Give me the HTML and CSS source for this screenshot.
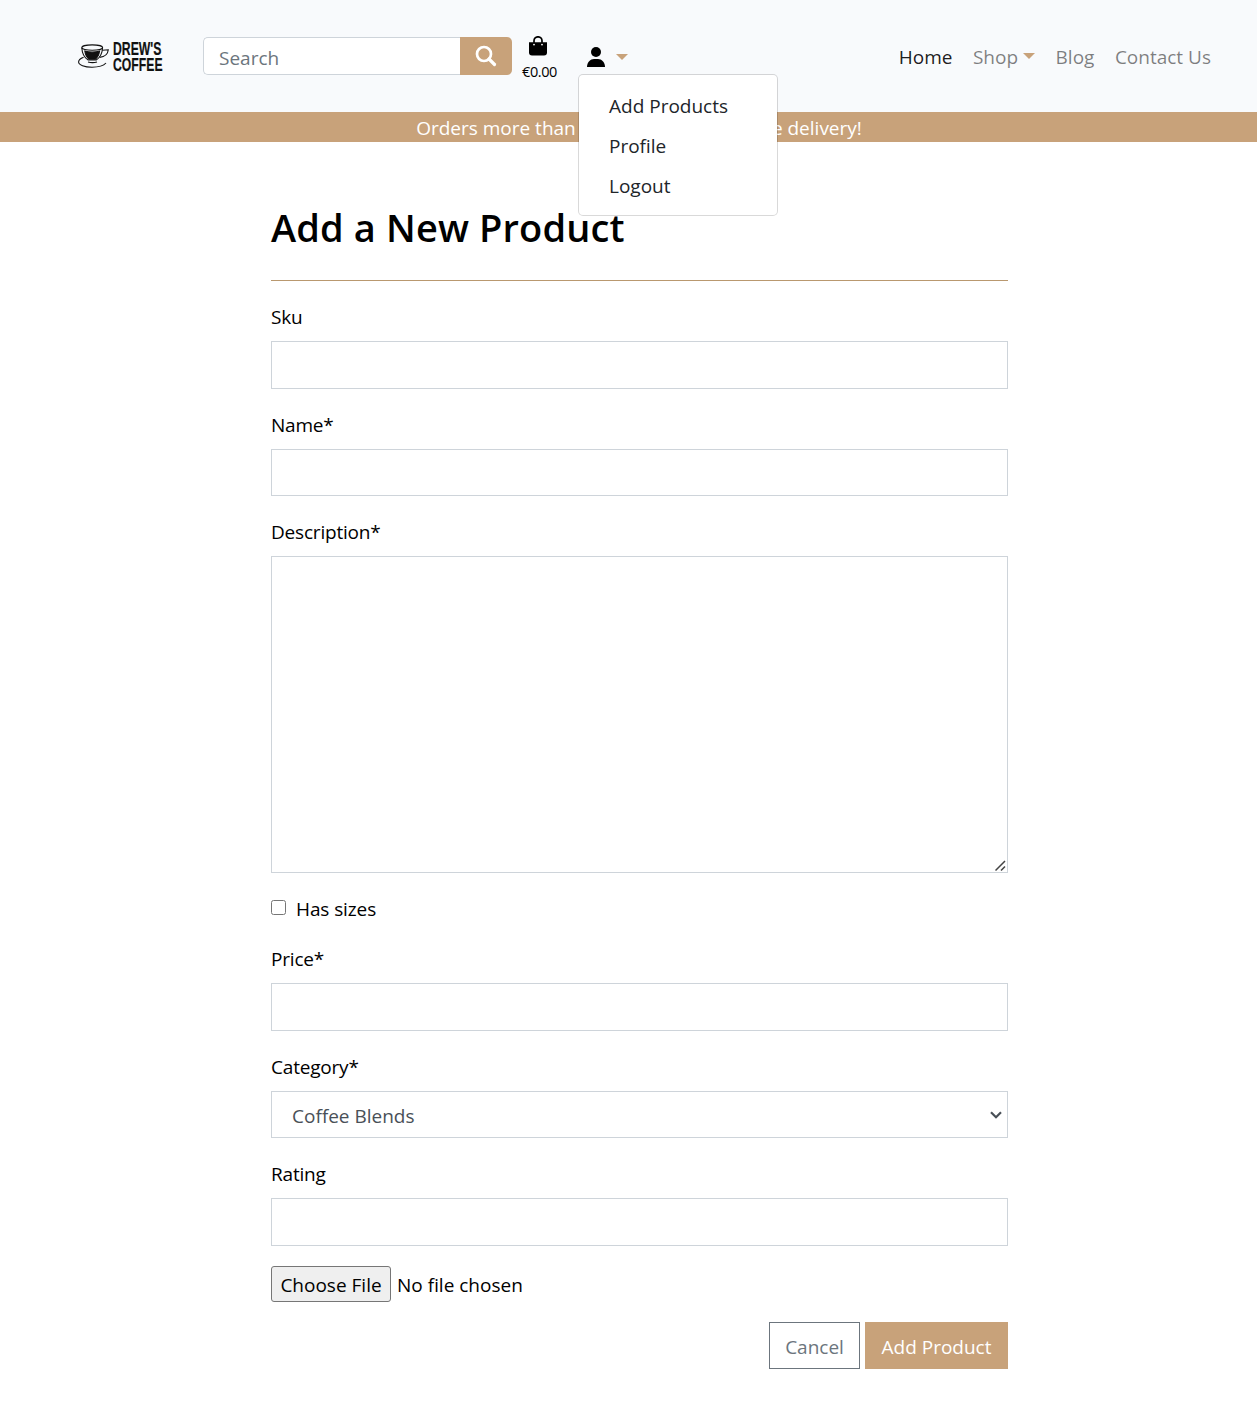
FILE: index.html
```
<!DOCTYPE html>
<html lang="en">
<head>
<meta charset="utf-8">
<title>Drew's Coffee - Add a New Product</title>
<link rel="stylesheet" href="styles.css">
</head>
<body>
<nav class="navbar">
  <a class="brand" href="#" aria-label="Drew's Coffee">
    <svg class="brand-cup" width="32" height="26" viewBox="0 0 32 26" fill="none" stroke="#111" stroke-width="1.100">
      <ellipse cx="14.200" cy="3.600" rx="10.400" ry="2.700"/>
      <path d="M3.800 3.800c.3 5.600 3 10.200 6.400 12.200h8c3.400-2 6-6.600 6.400-12.200"/>
      <path d="M6.800 7c4 1.500 10.800 1.500 14.800 0-.6 3.800-2 6.600-4.200 8.300h-6.400C8.800 13.600 7.400 10.800 6.800 7z" fill="#111"/>
      <path d="M24.300 6.200l6-.4c-.4 4-3.800 7-8.600 7.600M5.600 13.300C2 14.600.6 16 .6 18c0 3 6 5.200 13.400 5.200 6.400 0 11.600-1.500 14-4.200"/>
      <path d="M10 18c3 .8 6 .8 9 0"/>
    </svg>
    <span class="brand-text"><span>DREW'S</span><span>COFFEE</span></span>
  </a>
  <form class="search">
    <input class="search-input" type="text" placeholder="Search">
    <button class="search-button" type="button" aria-label="Search">
      <svg width="22" height="22" viewBox="0 0 22 22" fill="none" stroke="#fff"><circle cx="9" cy="9" r="7" stroke-width="2.700"/><path d="M14 14l5.500 5.500" stroke-width="3.200" stroke-linecap="round"/></svg>
    </button>
  </form>
  <a class="bag" href="#">
    <svg width="18" height="20" viewBox="0 0 18 20"><path d="M5 7V4.800a4 4 0 0 1 8 0V7" fill="none" stroke="#000" stroke-width="1.700"/><path d="M0 6.200h18V16.500a3 3 0 0 1-3 3H3a3 3 0 0 1-3-3z"/><circle cx="5" cy="8.600" r=".9" fill="#fff"/><circle cx="13" cy="8.600" r=".9" fill="#fff"/></svg>
    <span class="bag-total">€0.00</span>
  </a>
  <div class="account">
    <a class="account-toggle" href="#" aria-label="Account">
      <svg width="18" height="20" viewBox="0 0 18 20"><circle cx="9" cy="5" r="5"/><path d="M0 20c0-5 3.500-8 7-8h4c3.500 0 7 3 7 8z"/></svg>
      <span class="caret"></span>
    </a>
    <div class="menu">
      <a href="#">Add Products</a>
      <a href="#">Profile</a>
      <a href="#">Logout</a>
    </div>
  </div>
  <div class="links">
    <a class="active" href="#">Home</a>
    <a href="#">Shop<span class="caret"></span></a>
    <a href="#">Blog</a>
    <a href="#">Contact Us</a>
  </div>
</nav>
<div class="banner">Orders more than €50 will qualify for free delivery!</div>
<main class="page">
  <h1>Add a New Product</h1>
  <hr>
  <form>
    <div class="field"><label for="sku">Sku</label><input class="control" id="sku" type="text"></div>
    <div class="field"><label for="name">Name*</label><input class="control" id="name" type="text"></div>
    <div class="field">
      <label for="description">Description*</label>
      <div class="adorned">
        <textarea class="control area" id="description"></textarea>
        <svg class="grip" width="11" height="11" viewBox="0 0 11 11" fill="none" stroke="#444" stroke-width="1.500"><path d="M.5 10.500l9.500-9.500M6 10.500l4-4"/></svg>
      </div>
    </div>
    <div class="check"><input type="checkbox" id="sizes"><label for="sizes">Has sizes</label></div>
    <div class="field"><label for="price">Price*</label><input class="control" id="price" type="text"></div>
    <div class="field">
      <label for="category">Category*</label>
      <div class="adorned">
        <select class="control select" id="category"><option>Coffee Blends</option></select>
        <svg class="chevron" width="12" height="8" viewBox="0 0 12 8" fill="none" stroke="#495057" stroke-width="2.200"><path d="M1 1.200l5 5 5-5"/></svg>
      </div>
    </div>
    <div class="field"><label for="rating">Rating</label><input class="control" id="rating" type="text"></div>
    <div class="file"><button type="button">Choose File</button><span>No file chosen</span></div>
    <div class="actions"><a class="button cancel" href="#">Cancel</a><button class="button submit" type="button">Add Product</button></div>
  </form>
</main>
</body>
</html>
```
FILE: styles.css
```
* { box-sizing: border-box; }
body {
  margin: 0;
  min-height: 1422px;
  background: #fff;
  color: #000;
  font: 400 19px/30px "Open Sans", "Noto Sans", sans-serif;
}
a { color: inherit; text-decoration: none; }
input, select, textarea, button { font: inherit; }
svg { display: block; flex: none; }

.navbar { display: flex; align-items: center; height: 112px; padding: 0 36px 0 78px; background: #f8fafc; }
.brand { display: flex; align-items: center; gap: 3px; width: 125px; padding-top: 2px; }
.brand-text { display: flex; flex-direction: column; font: 700 18.500px/16px "Liberation Sans", sans-serif; color: #111; -webkit-text-stroke: .2px #111; transform: scaleX(.66); transform-origin: left; }
.search { display: flex; width: 309px; height: 38px; }
.search-input { width: 257px; border: 1px solid #ced4da; border-right: 0; border-radius: 5px 0 0 5px; padding: 3px 15px 0; background: #fff; outline: none; }
.search-input::placeholder { color: #6c757d; opacity: 1; }
.search-button { display: flex; justify-content: center; width: 52px; border: 0; border-radius: 0 5px 5px 0; padding: 8px 0 0; background: #c8a27a; }
.bag { display: flex; flex-direction: column; align-items: center; width: 52px; padding-top: 8px; }
.bag-total { margin: 4px -3px 0 0; font-size: 14.500px; line-height: 24px; letter-spacing: -.4px; }
.account { position: relative; margin-left: 23px; padding-top: 2px; }
.account-toggle { display: flex; align-items: center; gap: 11px; }
.caret { display: inline-block; width: 0; height: 0; border: 6px solid transparent; border-top-color: #c8a27a; border-bottom: 0; }
.menu { position: absolute; z-index: 2; top: 29px; left: -9px; width: 200px; height: 142px; padding: 11px 0 0 30px; border: 1px solid rgba(0, 0, 0, .15); border-radius: 5px; background: #fff; background-clip: padding-box; color: #212529; }
.menu a { display: block; height: 40px; line-height: 40px; white-space: nowrap; }
.links { display: flex; gap: 20.500px; margin-left: auto; padding: 2px 10px 0 0; color: rgba(0, 0, 0, .5); }
.links .active { color: rgba(0, 0, 0, .9); }
.links .caret { margin-left: 5px; vertical-align: 5px; }

.banner { height: 30px; padding: 1px 0 0 21px; background: #c8a27a; color: #fff; text-align: center; }

.page { width: 737px; margin-left: 271px; }
h1 { height: 98px; margin: 40px 0 0; padding-top: 21px; font-size: 38px; line-height: 48px; font-weight: 600; letter-spacing: .13px; }
hr { height: 1px; margin: 0 0 20px; border: 0; background: #b9986f; }
.field { display: flex; flex-direction: column; gap: 10px; margin-bottom: 20px; }
.field label { height: 30px; padding-top: 1px; letter-spacing: -.2px; }
.control { display: block; width: 100%; height: 47.500px; border: 1px solid #ced4da; border-radius: 0; padding: 2px 16px 0; background: #fff; color: #495057; outline: none; }
.area { height: 317px; resize: none; }
.select { appearance: none; padding: 3px 20px 0; }
.adorned { position: relative; }
.grip { position: absolute; right: 2px; bottom: 2px; }
.chevron { position: absolute; right: 6px; top: 20px; }
.check { display: flex; gap: 10px; height: 30px; margin-bottom: 20px; }
.check input { width: 15px; height: 15px; margin: 7px 0 0; }
.check label { padding-top: 1px; letter-spacing: -.1px; }
.file { display: flex; gap: 6px; height: 36.500px; margin-bottom: 20px; line-height: 38px; }
.file button { width: 120px; border: 1px solid #767676; border-radius: 3px; padding: 0; background: #efefef; color: #000; line-height: 36px; }
.actions { display: flex; justify-content: flex-end; gap: 5px; }
.button { display: block; height: 47px; border: 1px solid #6c757d; padding: 2px 0 0; line-height: 45px; text-align: center; }
.cancel { width: 91px; color: #6c757d; }
.submit { width: 143px; border-color: #c8a27a; background: #c8a27a; color: #fff; }
```
